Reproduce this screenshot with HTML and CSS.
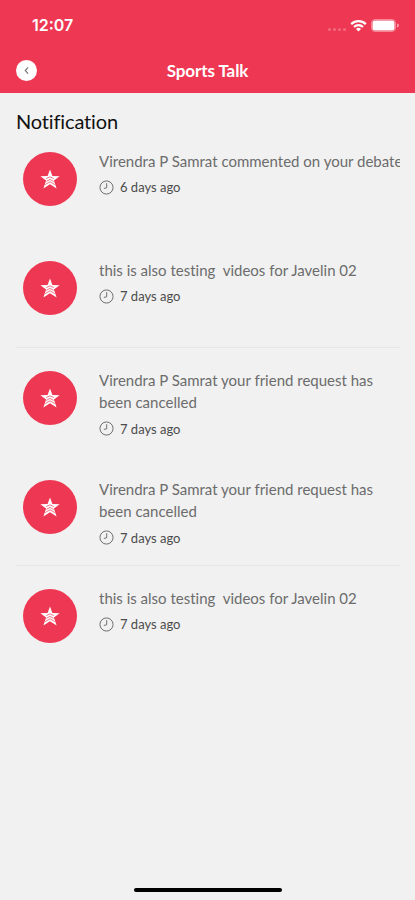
FILE: index.html
```html
<!DOCTYPE html>
<html lang="en">
<head>
<meta charset="utf-8">
<title>Sports Talk</title>
<link rel="stylesheet" href="styles.css">
</head>
<body>
<svg width="0" height="0" class="defs">
  <symbol id="star" viewBox="0 0 20 20">
    <path fill="#fff" d="M10 .4l2.4 6.7 7.2.1-5.7 4.3 2.7 7.9L10 15.2l-6.6 4.2 2.7-7.9L.4 7.2l7.2-.1z"/>
    <path fill="none" stroke="#ee3853" stroke-width=".7" d="M6.2 9.6L10 7.8l3.8 1.8M6.4 12.4L10 10.4l3.6 2M5.2 15.6L10 12.8l4.8 2.8"/>
  </symbol>
  <symbol id="clock" viewBox="0 0 16 16">
    <circle cx="8" cy="8" r="7" fill="none" stroke="#666" stroke-width="1"/>
    <path fill="none" stroke="#666" stroke-width="1" d="M8.2 3.4v4.9L5.2 9"/>
  </symbol>
</svg>
<div class="screen">
  <header class="header">
    <div class="status">
      <span class="time">12:07</span>
      <div class="indicators">
        <span class="signal"><i></i><i></i><i></i><i></i></span>
        <svg class="wifi" viewBox="0 0 17 13"><path fill="none" stroke="#fff" stroke-width="2.2" d="M1.2 5.1a10.4 10.4 0 0 1 14.6 0M4 8a6.4 6.4 0 0 1 9 0"/><path fill="#fff" d="M8.5 12.5L6 10a3.6 3.6 0 0 1 5 0z"/></svg>
        <svg class="battery" viewBox="0 0 28 13"><rect x=".5" y=".5" width="24" height="12" rx="3.5" fill="none" stroke="#fff" stroke-opacity=".4"/><rect x="1.5" y="1.5" width="22" height="10" rx="2.2" fill="#fff"/><path fill="#fff" fill-opacity=".5" d="M26 4.5a2 2 0 0 1 0 4z"/></svg>
      </div>
    </div>
    <nav class="nav">
      <span class="back"><svg viewBox="0 0 20 20"><path fill="none" stroke="#777" stroke-width="1.1" d="M11.5 7L8.8 10l2.7 3"/></svg></span>
      <h1 class="title">Sports Talk</h1>
    </nav>
  </header>
  <main class="content">
    <h2 class="heading">Notification</h2>
    <section class="row">
      <span class="avatar"><svg><use href="#star"/></svg></span>
      <div class="body"><p class="message single">Virendra P Samrat commented on your debate</p><p class="meta"><svg><use href="#clock"/></svg><span>6 days ago</span></p></div>
    </section>
    <section class="row">
      <span class="avatar"><svg><use href="#star"/></svg></span>
      <div class="body"><p class="message single">this is also testing&nbsp; videos for Javelin 02</p><p class="meta"><svg><use href="#clock"/></svg><span>7 days ago</span></p></div>
    </section>
    <section class="row divided">
      <span class="avatar"><svg><use href="#star"/></svg></span>
      <div class="body"><p class="message">Virendra P Samrat your friend request has<br>been cancelled</p><p class="meta"><svg><use href="#clock"/></svg><span>7 days ago</span></p></div>
    </section>
    <section class="row">
      <span class="avatar"><svg><use href="#star"/></svg></span>
      <div class="body"><p class="message">Virendra P Samrat your friend request has<br>been cancelled</p><p class="meta"><svg><use href="#clock"/></svg><span>7 days ago</span></p></div>
    </section>
    <section class="row divided">
      <span class="avatar"><svg><use href="#star"/></svg></span>
      <div class="body"><p class="message single">this is also testing&nbsp; videos for Javelin 02</p><p class="meta"><svg><use href="#clock"/></svg><span>7 days ago</span></p></div>
    </section>
  </main>
  <footer class="home"><span></span></footer>
</div>
</body>
</html>
```
FILE: styles.css
```css
* { box-sizing: border-box; }
body { margin: 0; font-family: Lato, "Liberation Sans", sans-serif; font-variant-ligatures: none; background: #f1f1f1; }
h1, h2, p { margin: 0; font-weight: 400; }
svg { display: block; }
.defs { display: none; }
.screen { width: 415px; height: 900px; display: flex; flex-direction: column; overflow: hidden; }
.header { height: 93px; flex: none; background: #ee3853; color: #fff; }
.status { height: 50px; padding: 0 16px 0 32px; display: flex; align-items: center; justify-content: space-between; }
.time { font: 600 16px/20px Inter, sans-serif; }
.indicators { display: flex; align-items: center; }
.signal { display: flex; gap: 2px; margin: 8px 4px 0 0; }
.signal i { width: 3px; height: 3px; border-radius: 50%; background: rgba(255, 255, 255, .25); }
.wifi { width: 17px; height: 13px; margin-right: 4px; }
.battery { width: 28px; height: 13px; }
.nav { height: 41px; padding: 0 16px; display: grid; grid-template-columns: 21px 1fr 21px; align-items: center; }
.back { width: 21px; height: 21px; border-radius: 50%; background: #fff; }
.title { font-size: 17px; font-weight: 700; text-align: center; line-height: 22px; letter-spacing: -.1px; }
.content { flex: 1; padding: 0 15px 0 16px; }
.heading { height: 35px; padding-top: 21px; line-height: 14px; font-size: 20px; color: #111; letter-spacing: -.15px; }
.row { height: 109.25px; display: flex; padding-top: 24px; border-top: 1px solid transparent; }
.divided { border-top-color: #e7e7e7; }
.avatar { width: 54px; height: 54px; flex: none; margin: -1px 22px 0 7px; border-radius: 50%; background: #ee3853; display: grid; place-items: center; }
.avatar svg { width: 20px; height: 20px; }
.body { flex: 1; min-width: 0; }
.message { font-size: 15px; line-height: 22px; margin-top: -3px; color: #6c6c6c; white-space: nowrap; overflow: hidden; }
.meta { display: flex; align-items: center; gap: 6px; height: 20px; margin-top: 6px; font-size: 13px; color: #4c4c4c; }
.single + .meta { margin-top: 5px; }
.meta svg { width: 15px; height: 15px; }
.home { height: 16px; flex: none; display: flex; justify-content: center; padding-top: 4px; }
.home span { width: 148px; height: 4px; border-radius: 2px; background: #000; }
```
